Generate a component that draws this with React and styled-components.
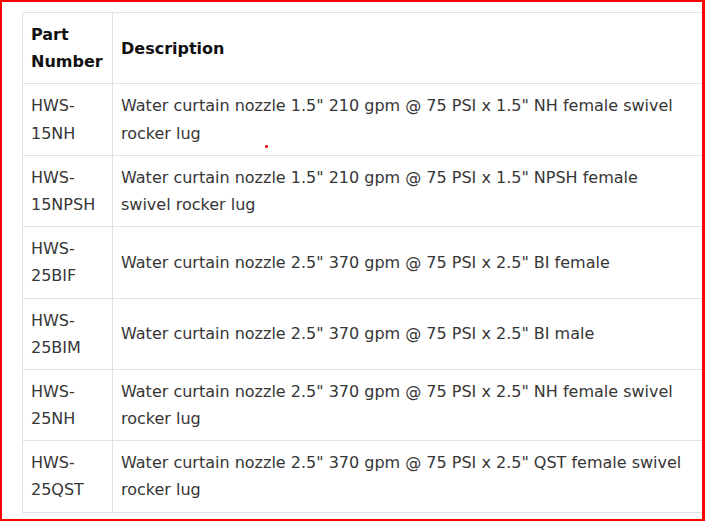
import React from 'react';
import styled, { createGlobalStyle } from 'styled-components';

const Global = createGlobalStyle`
  html, body { margin: 0; padding: 0; background: #fff; overflow: hidden; }
  body { font-family: "DejaVu Sans", "Open Sans", sans-serif; }
`;

const Frame = styled.div`
  position: fixed;
  inset: 0;
  border: 2px solid #ff0000;
  border-right-width: 3px;
  pointer-events: none;
  z-index: 10;
`;

const Dot = styled.div`
  position: absolute;
  left: 265px;
  top: 145px;
  width: 3px;
  height: 3px;
  background: #e8141b;
  border-radius: 1px;
`;

const Page = styled.div`
  position: relative;
  width: 705px;
  height: 521px;
  overflow: hidden;
  padding: 12px 0 0 22px;
  box-sizing: border-box;
`;

const Table = styled.table`
  border-collapse: collapse;
  table-layout: fixed;
  width: 688px;
  font-size: 16px;
  line-height: 1.7;
`;

const HeadCell = styled.th`
  border: 1px solid #e1e1e1;
  padding: 8px ${p => (p.$wide ? '24px' : '9px')} 8px 8px;
  text-align: left;
  vertical-align: middle;
  font-weight: 700;
  color: #111;
  width: ${p => p.$w || 'auto'};
`;

const Cell = styled.td`
  border: 1px solid #e1e1e1;
  padding: 8px ${p => (p.$wide ? '24px' : '9px')} 8px 8px;
  vertical-align: middle;
  color: #363636;
  font-weight: 400;
`;

const rows = [
  ['HWS-15NH', 'Water curtain nozzle 1.5" 210 gpm @ 75 PSI x 1.5" NH female swivel rocker lug'],
  ['HWS-15NPSH', 'Water curtain nozzle 1.5" 210 gpm @ 75 PSI x 1.5" NPSH female swivel rocker lug'],
  ['HWS-25BIF', 'Water curtain nozzle 2.5" 370 gpm @ 75 PSI x 2.5" BI female'],
  ['HWS-25BIM', 'Water curtain nozzle 2.5" 370 gpm @ 75 PSI x 2.5" BI male'],
  ['HWS-25NH', 'Water curtain nozzle 2.5" 370 gpm @ 75 PSI x 2.5" NH female swivel rocker lug'],
  ['HWS-25QST', 'Water curtain nozzle 2.5" 370 gpm @ 75 PSI x 2.5" QST female swivel rocker lug'],
];

export default function App() {
  return (
    <>
      <Global />
      <Page>
        <Table>
          <thead>
            <tr>
              <HeadCell $w="72px">Part Number</HeadCell>
              <HeadCell $wide>Description</HeadCell>
            </tr>
          </thead>
          <tbody>
            {rows.map(([p, d]) => (
              <tr key={p}>
                <Cell>{p}</Cell>
                <Cell $wide>{d}</Cell>
              </tr>
            ))}
          </tbody>
        </Table>
        <Dot />
      </Page>
      <Frame />
    </>
  );
}
